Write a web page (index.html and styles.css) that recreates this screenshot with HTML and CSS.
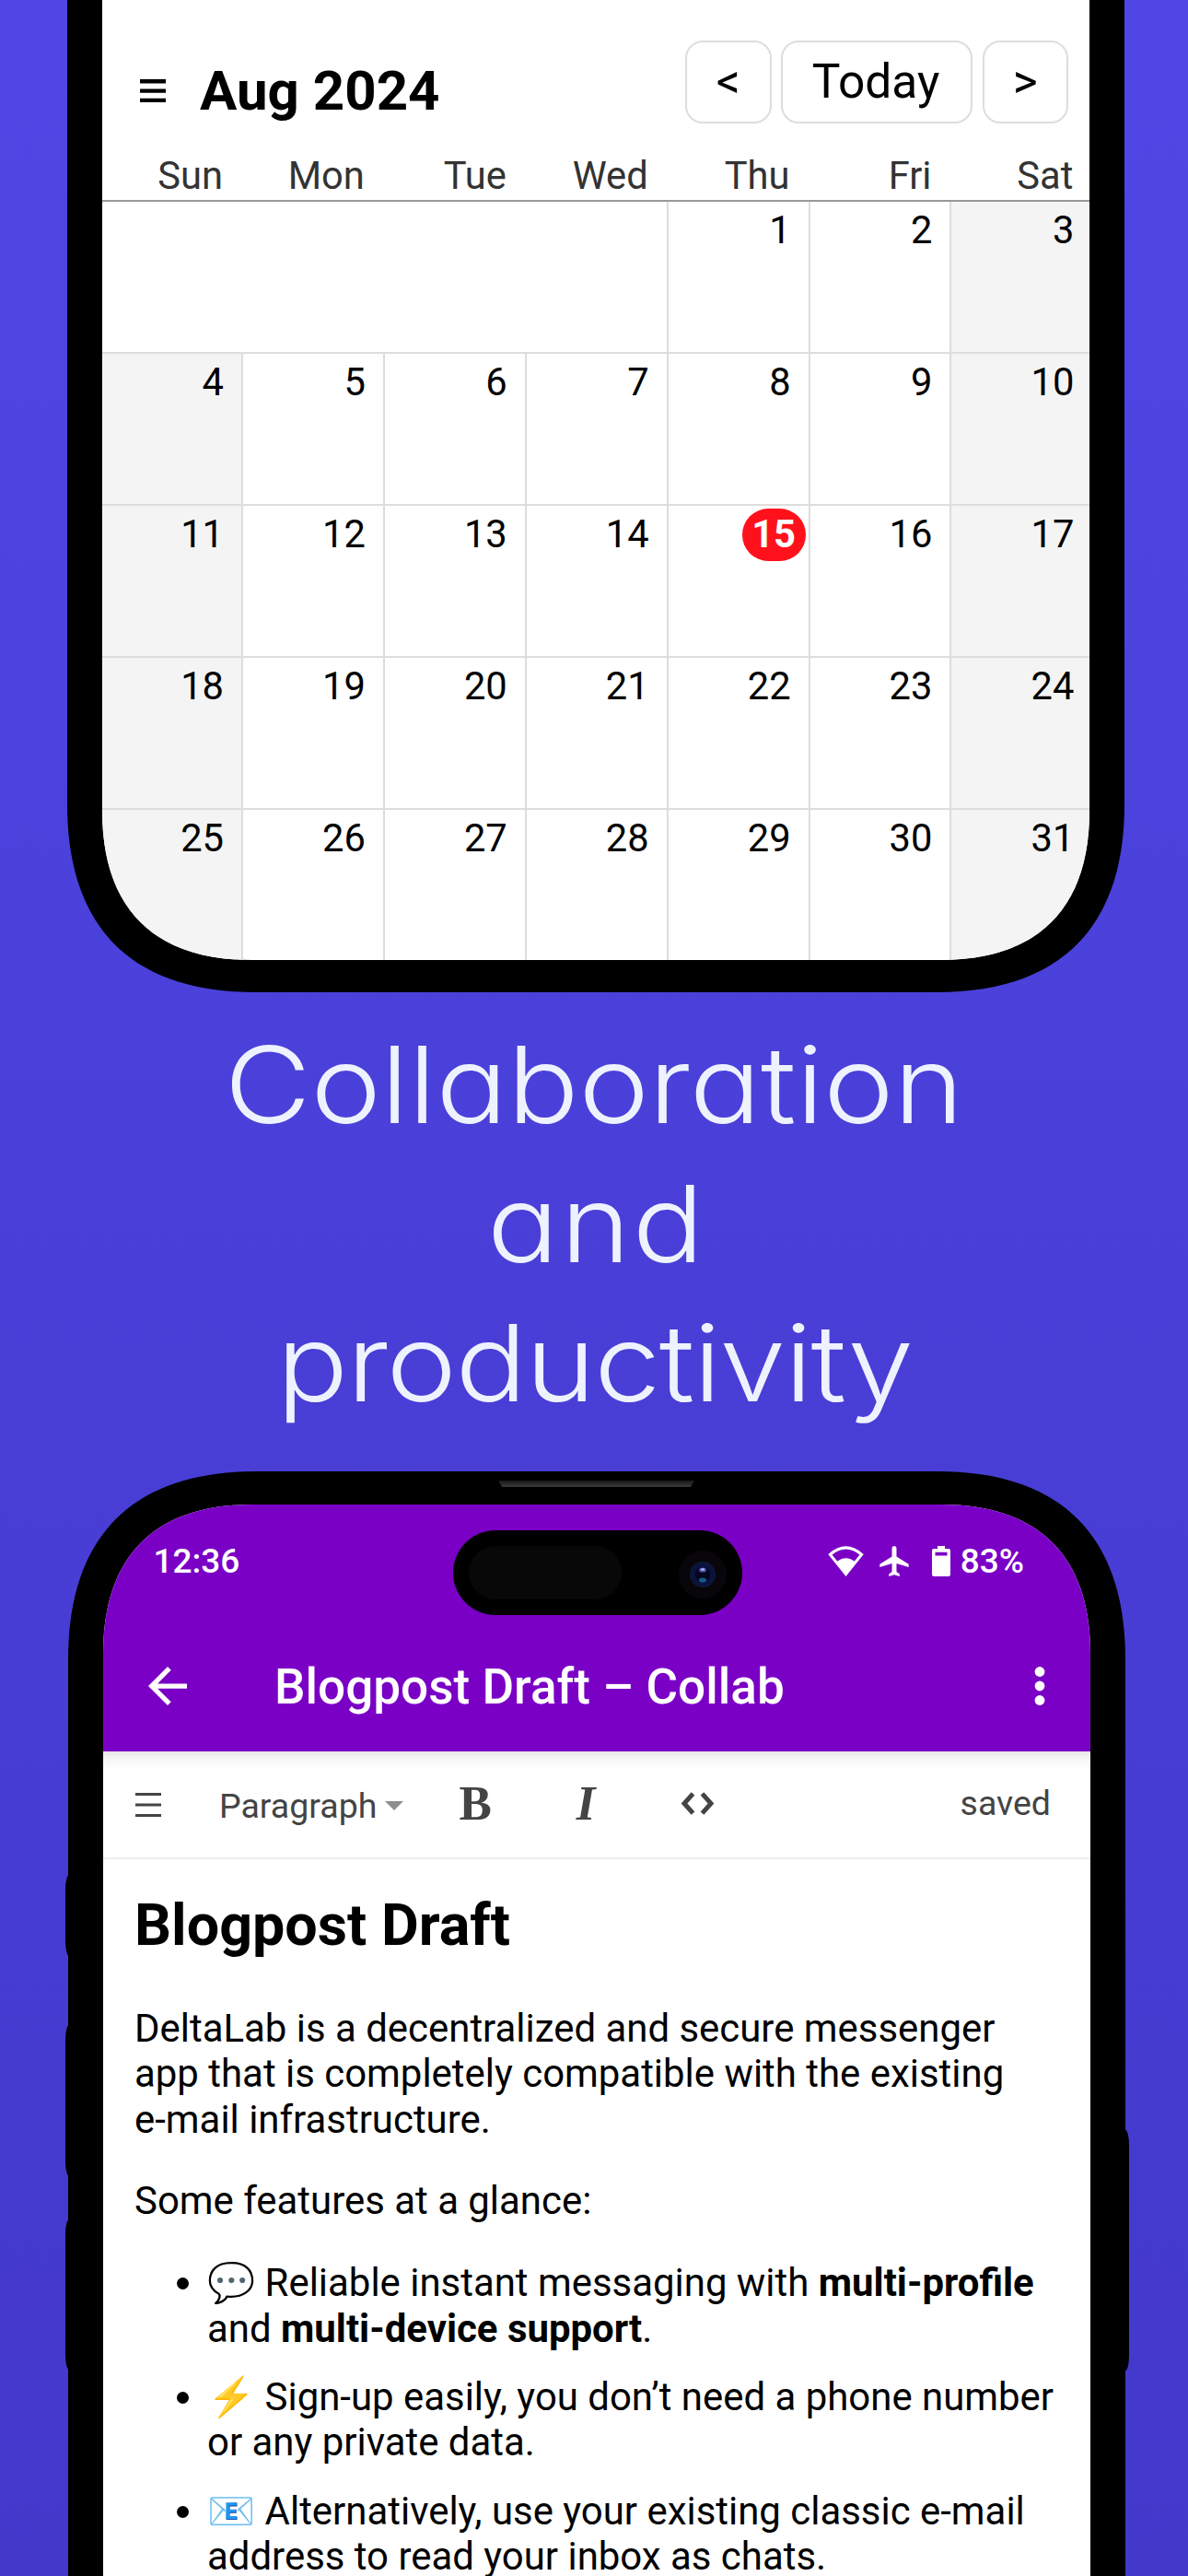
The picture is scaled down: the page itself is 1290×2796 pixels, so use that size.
FILE: index.html
```html
<!DOCTYPE html>
<html lang="en">
<head>
<meta charset="utf-8">
<title>Collaboration and productivity</title>
<link rel="stylesheet" href="styles.css">
</head>
<body>
<main class="poster">
  <section class="phone phone-top">
    <div class="frame frame-top">
      <div class="screen screen-top">
        <header class="cal-header">
          <svg class="cal-menu" viewBox="0 0 28 26"><path d="M0 2.3h28M0 12.6h28M0 22.9h28" stroke="#000" stroke-width="4.4"/></svg>
          <h2 class="cal-title">Aug 2024</h2>
          <nav class="cal-nav">
            <span class="btn btn-step">&lt;</span>
            <span class="btn btn-today">Today</span>
            <span class="btn btn-step">&gt;</span>
          </nav>
        </header>
        <div class="weekdays">
          <span>Sun</span><span>Mon</span><span>Tue</span><span>Wed</span><span>Thu</span><span>Fri</span><span>Sat</span>
        </div>
        <div class="month">
          <div class="day blank"></div><div class="day">1</div><div class="day">2</div><div class="day weekend">3</div>
          <div class="day weekend">4</div><div class="day">5</div><div class="day">6</div><div class="day">7</div><div class="day">8</div><div class="day">9</div><div class="day weekend">10</div>
          <div class="day weekend">11</div><div class="day">12</div><div class="day">13</div><div class="day">14</div><div class="day"><span class="today">15</span></div><div class="day">16</div><div class="day weekend">17</div>
          <div class="day weekend">18</div><div class="day">19</div><div class="day">20</div><div class="day">21</div><div class="day">22</div><div class="day">23</div><div class="day weekend">24</div>
          <div class="day weekend">25</div><div class="day">26</div><div class="day">27</div><div class="day">28</div><div class="day">29</div><div class="day">30</div><div class="day weekend">31</div>
        </div>
      </div>
    </div>
  </section>

  <h1 class="headline">
    <span class="line line-1">Collaboration</span>
    <span class="line line-2">and</span>
    <span class="line line-3">productivity</span>
  </h1>

  <section class="phone phone-bottom">
    <i class="key key-action"></i><i class="key key-up"></i><i class="key key-down"></i><i class="key key-power"></i>
    <div class="frame frame-bottom">
      <i class="speaker"></i>
      <div class="screen screen-bottom">
        <div class="island">
          <i class="sensor"></i>
          <svg class="camera" viewBox="0 0 52 52">
            <defs>
              <radialGradient id="lens"><stop offset="0" stop-color="#080a30"/><stop offset=".6" stop-color="#0a1040"/><stop offset="1" stop-color="#0b1836"/></radialGradient>
            </defs>
            <circle cx="26" cy="26" r="26" fill="#09060b"/>
            <circle cx="26" cy="26" r="14" fill="url(#lens)"/>
            <circle cx="26" cy="26" r="8" fill="#05061c"/>
            <ellipse cx="26" cy="21" rx="4" ry="2.600" fill="#4a50b4"/>
            <ellipse cx="26" cy="20.500" rx="2" ry="1.200" fill="#b4b8ee"/>
            <ellipse cx="26" cy="32" rx="4" ry="2.600" fill="#165a86"/>
          </svg>
        </div>
        <div class="statusbar">
          <span>12:36</span>
          <div class="status-icons">
            <svg class="wifi" viewBox="0 0 39 33"><path d="M2.300 9.300Q19.500 -5.500 36.700 9.300L19.500 30.500Z" fill="none" stroke="#fff" stroke-width="3"/><path d="M9 17.500Q19.500 9 30 17.500L19.500 32Z" fill="#fff"/></svg>
            <svg class="plane" viewBox="2 2 19 20"><path fill="#fff" d="M21 16v-2l-8-5V3.500c0-.83-.67-1.500-1.500-1.500S10 2.670 10 3.500V9l-8 5v2l8-2.500V19l-2 1.500V22l3.500-1 3.500 1v-1.500L13 19v-5.500l8 2.500z"/></svg>
            <svg class="battery" viewBox="0 0 20 33"><path fill="#fff" fill-rule="evenodd" d="M6 0h8v3h4a2 2 0 0 1 2 2v26a2 2 0 0 1-2 2H2a2 2 0 0 1-2-2V5a2 2 0 0 1 2-2h4zM3.500 6.800v3.600h13V6.800z"/></svg>
            <span>83%</span>
          </div>
        </div>
        <div class="appbar">
          <svg class="back" viewBox="4 4 16 16"><path fill="#fff" d="M20 11H7.830l5.590-5.590L12 4l-8 8 8 8 1.410-1.410L7.830 13H20v-2z"/></svg>
          <span class="app-title">Blogpost Draft – Collab</span>
          <svg class="more" viewBox="0 0 12 42"><circle cx="6" cy="5.500" r="5.400" fill="#fff"/><circle cx="6" cy="21" r="5.400" fill="#fff"/><circle cx="6" cy="36.500" r="5.400" fill="#fff"/></svg>
        </div>
        <div class="toolbar">
          <svg class="tool-menu" viewBox="0 0 28 26"><path d="M0 1.500h28M0 13h28M0 24.500h28" stroke="#444" stroke-width="2.800"/></svg>
          <span class="tool-block">Paragraph</span>
          <svg class="caret" viewBox="0 0 20 10"><path d="M0 0h20L10 10z" fill="#8e8e8e"/></svg>
          <span class="tool-bold">B</span>
          <span class="tool-italic">I</span>
          <svg class="code" viewBox="0 0 37 25"><path d="M13.500 1.800L4 12.500l9.500 10.700M23.500 1.800L33 12.500l-9.500 10.700" fill="none" stroke="#444" stroke-width="5"/></svg>
          <span class="saved">saved</span>
        </div>
        <article class="doc">
          <h2 class="doc-title">Blogpost Draft</h2>
          <p>DeltaLab is a decentralized and secure messenger<br>app that is completely compatible with the existing<br>e-mail infrastructure.</p>
          <p>Some features at a glance:</p>
          <ul>
            <li>💬 Reliable instant messaging with <b>multi-profile</b><br>and <b>multi-device support</b>.</li>
            <li>⚡ Sign-up easily, you don’t need a phone number<br>or any private data.</li>
            <li>📧 Alternatively, use your existing classic e-mail<br>address to read your inbox as chats.</li>
          </ul>
        </article>
      </div>
    </div>
  </section>
</main>
</body>
</html>
```
FILE: styles.css
```css
* { box-sizing: border-box; }

body {
  margin: 0;
  font-family: Roboto, "Noto Color Emoji", sans-serif;
  color: #000;
}

h1, h2, p, ul { margin: 0; padding: 0; font-weight: 400; }
svg { display: block; flex: none; }

.poster {
  width: 1290px;
  height: 2796px;
  overflow: hidden;
  background: linear-gradient(180deg, #4f46e5, #4338ca);
}

/* Phone shells */
.phone { position: relative; }
.phone-top { height: 1077px; padding-left: 73px; }
.phone-bottom { height: 1199px; padding-left: 74px; }

.frame {
  width: 1148px;
  height: 100%;
  background: #000;
}
.frame-top {
  padding: 0 38px 35px;
  clip-path: path("M0 0V873C0 1007 70 1077 204 1077H944C1078 1077 1148 1007 1148 873V0Z");
}
.frame-bottom {
  padding: 36px 38px 0;
  clip-path: path("M0 1199V204C0 70 70 0 204 0H944C1078 0 1148 70 1148 204V1199Z");
}

.screen {
  height: 100%;
  background: #fff;
  overflow: hidden;
}
.screen-top {
  clip-path: path("M0 0V880C0 986 56 1042 162 1042H910C1016 1042 1072 986 1072 880V0Z");
}
.screen-bottom {
  position: relative;
  clip-path: path("M0 1163V162C0 56 56 0 162 0H910C1016 0 1072 56 1072 162V1163Z");
}

.key { position: absolute; width: 8px; background: #000; border-radius: 4px / 16px; }
.key-action { left: 70.5px; top: 438px; height: 88px; }
.key-up { left: 70.5px; top: 601px; height: 164px; }
.key-down { left: 70.5px; top: 812px; height: 163px; }
.key-power { left: 1218px; top: 715px; height: 261px; }

.speaker {
  position: absolute;
  left: 541px;
  top: 10px;
  width: 213px;
  height: 7px;
  background: linear-gradient(#161616, #3c3c3c);
  clip-path: polygon(0 0, 100% 0, 98% 100%, 2% 100%);
}

/* Calendar */
.cal-header {
  display: flex;
  align-items: center;
  height: 163px;
  padding: 15px 23px 0 41px;
}
.cal-menu { width: 28px; height: 26px; margin-top: 20px; }
.cal-title {
  margin: 20px 0 0 37px;
  font-size: 60px;
  font-weight: 700;
  line-height: 70px;
}
.cal-nav { display: flex; gap: 10.5px; margin-left: auto; }
.btn {
  height: 90px;
  border: 2px solid #ddd;
  border-radius: 19px;
  font-size: 51.5px;
  line-height: 86px;
  text-align: center;
}
.btn-step { width: 93.5px; }
.btn-today { width: 208px; padding-right: 2px; }

.weekdays, .month {
  display: grid;
  grid-template-columns: 153px repeat(6, 153.9px);
}
.weekdays {
  height: 56px;
  border-bottom: 2px solid #999;
  font-size: 41.7px;
  line-height: 55px;
  color: #333;
  text-align: right;
}
.weekdays span { padding-right: 22px; }

.month { grid-template-rows: repeat(5, 165px); }
.day {
  border: solid #ddd;
  border-width: 0 2px 2px 0;
  padding: 3px 19px 0 0;
  font-size: 41.7px;
  line-height: 56px;
  text-align: right;
}
.blank { grid-column: span 4; }
.weekend { background: #f4f4f4; }
.today {
  float: right;
  height: 57px;
  width: 69px;
  margin-right: -16px;
  border-radius: 28.5px;
  background: #ff111b;
  color: #fff;
  font-weight: 700;
  text-align: center;
}

/* Headline */
.headline {
  height: 520px;
  padding-top: 25px;
  font-family: Inter, sans-serif;
  font-size: 115px;
  font-weight: 300;
  font-feature-settings: "cv11";
  line-height: 151px;
  text-align: center;
  color: #eef2ff;
}
.line { display: block; transform: scaleX(1.12); }
.line-1 { letter-spacing: -0.1px; }
.line-2 { padding-left: 5px; letter-spacing: 2px; }
.line-3 { padding-left: 1px; letter-spacing: -1.2px; }

/* Status bar and app bar */
.island {
  position: absolute;
  left: 380px;
  top: 28px;
  width: 314px;
  height: 92px;
  border-radius: 46px;
  background: #000;
  display: flex;
  align-items: center;
  justify-content: space-between;
  padding: 0 17px;
}
.sensor { width: 166px; height: 58px; border-radius: 29px; background: #080808; }
.camera { width: 52px; height: 52px; margin-top: 4px; }

.statusbar {
  display: flex;
  align-items: center;
  justify-content: space-between;
  height: 123px;
  padding: 0 72px 0 54.5px;
  background: #7a00c6;
  color: #fff;
  font-size: 37px;
  font-weight: 500;
}
.status-icons { display: flex; align-items: center; }
.wifi { width: 39px; height: 33px; }
.plane { width: 32px; height: 33px; margin: 0 25px 0 17px; }
.battery { width: 20px; height: 33px; margin-right: 11px; }

.appbar {
  display: flex;
  align-items: center;
  height: 145px;
  padding: 3px 49px 0 49px;
  background: #7a00c6;
  color: #fff;
}
.back { width: 42px; height: 42px; }
.app-title { margin-left: 95px; padding-top: 2px; font-size: 53.100px; font-weight: 500; }
.more { width: 12px; height: 42px; margin-left: auto; }

/* Editor toolbar */
.toolbar {
  display: flex;
  align-items: center;
  height: 117px;
  padding: 0 43px 0 35px;
  border-bottom: 2px solid #eee;
  background: linear-gradient(#e6e6e6, #f6f6f6 8px, #fff 20px);
  color: #444;
  font-size: 37.5px;
}
.tool-menu { width: 28px; height: 26px; }
.tool-block { margin-left: 63px; padding-top: 2px; }
.caret { width: 20px; height: 10px; margin: 2px 0 0 9px; }
.tool-bold, .tool-italic {
  padding-bottom: 3px;
  font-family: "Liberation Serif", serif;
  font-size: 53px;
  font-weight: 700;
}
.tool-bold { margin-left: 60px; }
.tool-italic { margin-left: 92px; font-style: italic; }
.code { width: 37px; height: 25px; margin: 0 0 2px 93px; }
.saved { margin: -4px 0 0 auto; }

/* Document */
.doc {
  padding: 35px 0 0 34px;
  font-size: 41.930px;
  line-height: 49.3px;
  white-space: nowrap;
}
.doc-title { margin-bottom: 50px; font-size: 62.800px; font-weight: 700; line-height: 74px; }
.doc p { margin-bottom: 39.6px; }
.doc ul { padding-left: 79px; }
.doc li { height: 98.600px; margin-bottom: 25px; }
```
